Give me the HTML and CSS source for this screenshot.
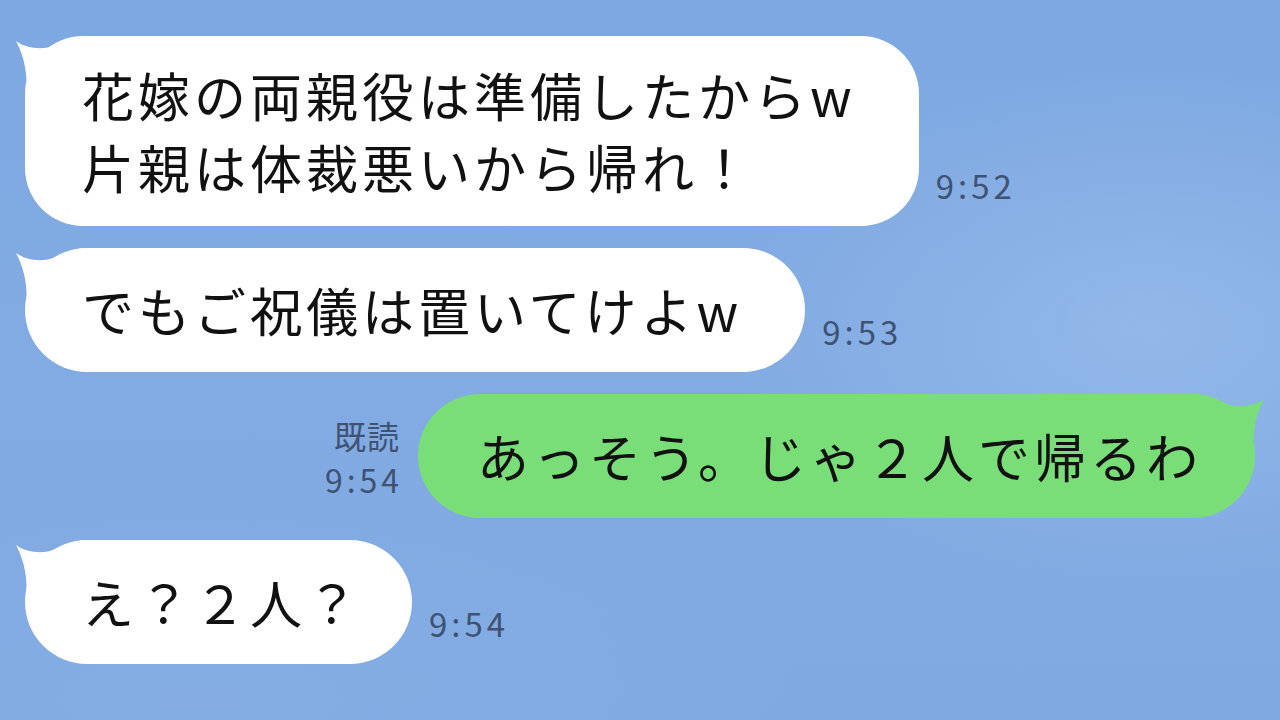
FILE: index.html
```html
<!DOCTYPE html>
<html lang="ja">
<head>
    <meta charset="UTF-8">
    <meta name="viewport" content="width=device-width, initial-scale=1.0">
    <title>トーク</title>
    <link rel="stylesheet" href="styles.css">
</head>
<body>
    <div class="chat">
        <div class="row incoming">
            <div class="bubble multi">
                <svg class="tail" viewBox="0 0 70 60" width="70" height="60"><path d="M1,5 C10,12 28,15 40,9 C50,4 58,1 70,0 L70,60 L11,60 C13,40 10,22 1,5 Z"/></svg>
                <p>花嫁の両親役は準備したからw</p>
                <p>片親は体裁悪いから帰れ！</p>
            </div>
            <div class="meta"><span class="time">9:52</span></div>
        </div>

        <div class="row incoming">
            <div class="bubble">
                <svg class="tail" viewBox="0 0 70 60" width="70" height="60"><path d="M1,5 C10,12 28,15 40,9 C50,4 58,1 70,0 L70,60 L11,60 C13,40 10,22 1,5 Z"/></svg>
                <p>でもご祝儀は置いてけよw</p>
            </div>
            <div class="meta"><span class="time">9:53</span></div>
        </div>

        <div class="row outgoing">
            <div class="meta">
                <span class="read">既読</span>
                <span class="time">9:54</span>
            </div>
            <div class="bubble">
                <svg class="tail" viewBox="0 0 70 60" width="70" height="60"><path d="M1,5 C10,12 28,15 40,9 C50,4 58,1 70,0 L70,60 L11,60 C13,40 10,22 1,5 Z"/></svg>
                <p>あっそう。じゃ２人で帰るわ</p>
            </div>
        </div>

        <div class="row incoming">
            <div class="bubble short">
                <svg class="tail" viewBox="0 0 70 60" width="70" height="60"><path d="M1,5 C10,12 28,15 40,9 C50,4 58,1 70,0 L70,60 L11,60 C13,40 10,22 1,5 Z"/></svg>
                <p>え？２人？</p>
            </div>
            <div class="meta"><span class="time">9:54</span></div>
        </div>
    </div>
</body>
</html>
```

FILE: styles.css
```css
html, body {
    margin: 0;
    height: 100%;
}
body {
    font-family: "Noto Sans CJK JP", "Noto Sans", sans-serif;
    background-color: #80a9e2;
    background-image:
        radial-gradient(ellipse 420px 260px at 1150px 330px, rgba(160, 195, 238, 0.55), rgba(160, 195, 238, 0)),
        radial-gradient(ellipse 600px 200px at 200px 700px, rgba(140, 180, 232, 0.4), rgba(140, 180, 232, 0)),
        linear-gradient(180deg, #7ea8e2 0%, #82abe3 50%, #80a9e2 100%);
    overflow: hidden;
}
.chat {
    display: flex;
    flex-direction: column;
    gap: 22px;
    padding: 36px 25px;
}
.row {
    display: flex;
    align-items: flex-end;
}
.row.outgoing {
    justify-content: flex-end;
}
.bubble {
    position: relative;
    background: #fff;
    color: #111;
    font-size: 52px;
    line-height: 72px;
    letter-spacing: 4px;
    padding: 26px 63px 26px 57px;
    border-radius: 62px;
}
.bubble.multi {
    padding-top: 23px;
    padding-bottom: 23px;
    border-radius: 58px;
}
.bubble.short {
    padding-right: 50px;
}
.bubble p {
    margin: 0;
    position: relative;
    white-space: nowrap;
}
.tail {
    position: absolute;
    left: -10px;
    top: 0;
    fill: #fff;
}
.outgoing .bubble {
    background: #79de78;
    padding: 26px 53px 26px 59px;
}
.outgoing .tail {
    left: auto;
    right: -10px;
    transform: scaleX(-1);
    fill: #79de78;
}
.meta {
    display: flex;
    flex-direction: column;
    color: #3f5272;
    font-size: 33px;
    line-height: 42px;
    padding-bottom: 20px;
}
.incoming .meta {
    margin-left: 17px;
}
.outgoing .meta {
    align-items: flex-end;
    gap: 2px;
    font-size: 32px;
    padding-bottom: 18px;
    margin-right: 19px;
}
.time {
    letter-spacing: 4px;
    margin-right: -4px;
}
.read {
    letter-spacing: 1px;
    margin-right: -1px;
}
```
